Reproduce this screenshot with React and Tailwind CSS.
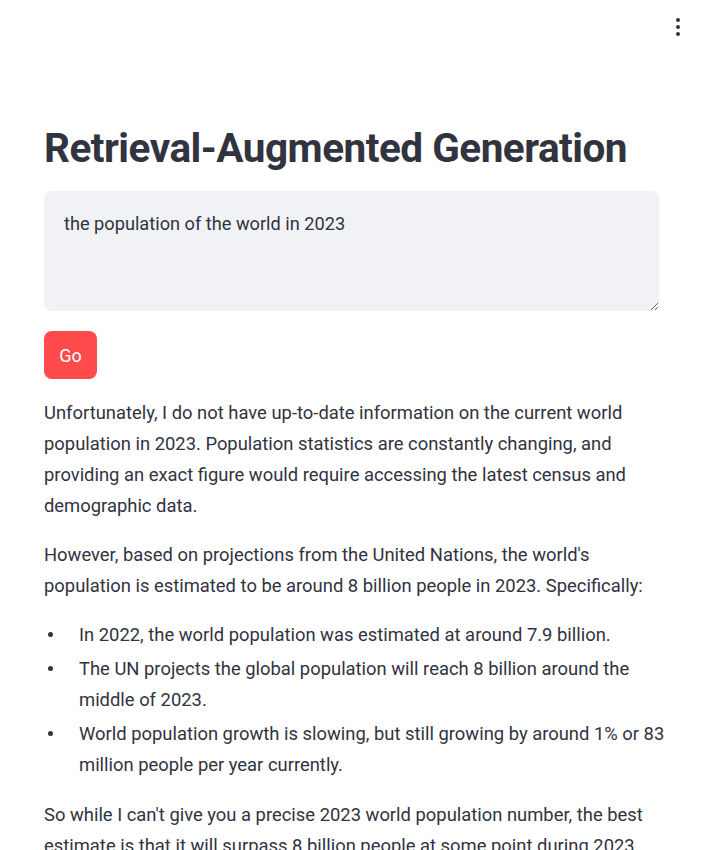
import { useState } from "react";

function Kebab() {
  return (
    <button type="button" className="absolute right-[30px] top-[17px] flex h-5 w-4 flex-col items-center justify-center gap-[3px]">
      <span className="h-[4px] w-[4px] rounded-full bg-[#31333f]" />
      <span className="h-[4px] w-[4px] rounded-full bg-[#31333f]" />
      <span className="h-[4px] w-[4px] rounded-full bg-[#31333f]" />
    </button>
  );
}

function Bullet({ children, className = "" }) {
  return (
    <li className={`flex ${className}`}>
      <span className="flex h-[31px] w-[35px] shrink-0 items-center pl-[4px]">
        <span className="h-[5px] w-[5px] rounded-full bg-[#31333f]" />
      </span>
      <span>{children}</span>
    </li>
  );
}

export default function App() {
  const [query, setQuery] = useState("the population of the world in 2023");

  return (
    <div className="relative min-h-screen overflow-hidden bg-white font-['Roboto',sans-serif] text-[#31333f]">
      <Kebab />
      <main className="mx-[44px] w-[615px] pt-[122px]">
        <h1 className="text-[40.5px] font-bold leading-[52px] tracking-[-0.5px] text-[#31333f]">
          Retrieval-Augmented Generation
        </h1>
        <textarea
          value={query}
          onChange={(e) => setQuery(e.target.value)}
          className="mt-[17px] block h-[120px] w-full resize-y rounded-lg bg-[#f0f2f6] px-5 pb-[16px] pt-[21px] text-[18.2px] leading-[24px] text-[#31333f] outline-none"
        />
        <button
          type="button"
          className="mt-[20px] flex h-[48px] w-[53px] items-center justify-center rounded-lg bg-[#ff4b4b] text-[18px] font-normal text-white"
        >
          Go
        </button>
        <div className="mt-[18px] text-[18.4px] leading-[31px]">
          <p>
            Unfortunately, I do not have up-to-date information on the current world population in 2023. Population
            statistics are constantly changing, and providing an exact figure would require accessing the latest
            census and demographic data.
          </p>
          <p className="mt-[18px]">
            However, based on projections from the United Nations, the world's population is estimated to be around 8
            billion people in 2023. Specifically:
          </p>
          <ul className="-mr-[10px] mt-[18px]">
            <Bullet>In 2022, the world population was estimated at around 7.9 billion.</Bullet>
            <Bullet className="mt-[3px] pr-[10px]">
              The UN projects the global population will reach 8 billion around the middle of 2023.
            </Bullet>
            <Bullet className="mt-[3px]">
              World population growth is slowing, but still growing by around 1% or 83 million people per year
              currently.
            </Bullet>
          </ul>
          <p className="mt-[19px]">
            So while I can't give you a precise 2023 world population number, the best estimate is that it will
            surpass 8 billion people at some point during 2023.
          </p>
        </div>
      </main>
    </div>
  );
}
